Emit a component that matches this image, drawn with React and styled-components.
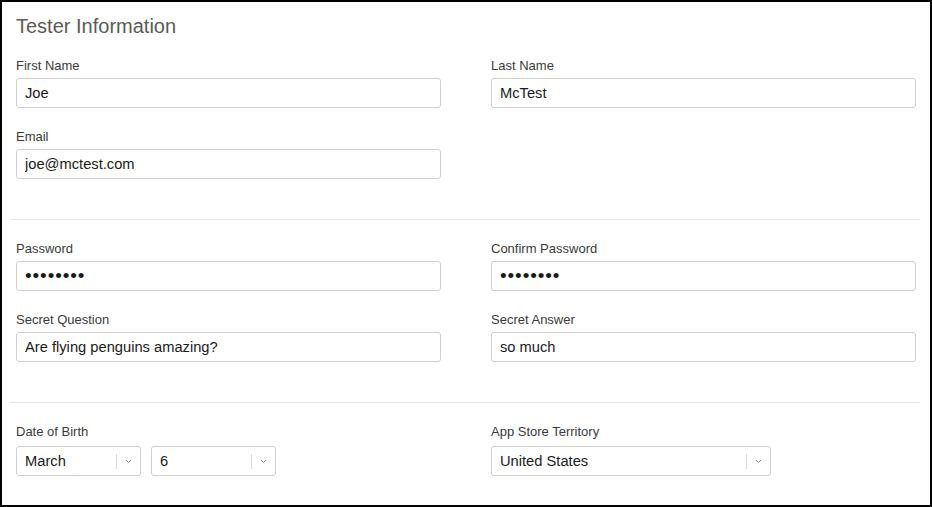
import React from "react";
import styled, { createGlobalStyle } from "styled-components";

const Global = createGlobalStyle`
  html, body { margin: 0; padding: 0; background: #fff; }
  body { font-family: "Liberation Sans", Arial, sans-serif; }
  * { box-sizing: border-box; }
`;

const Frame = styled.div`
  width: 932px;
  height: 507px;
  border: 2px solid #000;
  background: #fff;
  padding: 0 14px;
  overflow: hidden;
`;

const Title = styled.h1`
  margin: 13px 0 0 0;
  font-size: 20px;
  line-height: 23px;
  font-weight: 400;
  color: #5a5a5a;
`;

const Section = styled.section`
  display: flex;
  flex-direction: column;
  gap: 21px;
  padding-top: ${(p) => p.$top}px;
`;

const Row = styled.div`
  display: grid;
  grid-template-columns: 425px 425px;
  column-gap: 50px;
`;

const Field = styled.div`
  display: flex;
  flex-direction: column;
  gap: ${(p) => p.$gap || 5}px;
`;

const Label = styled.label`
  font-size: 13px;
  line-height: 15px;
  color: #3a3a3a;
  height: 15px;
`;

const Input = styled.input`
  width: 100%;
  height: 30px;
  border: 1px solid #cfcfcf;
  border-radius: 3px;
  padding: 0 8px;
  margin: 0;
  font-family: "Liberation Sans", Arial, sans-serif;
  font-size: ${(p) => (p.$mask ? "19px" : "14.7px")};
  letter-spacing: ${(p) => (p.$mask ? "0.9px" : "0")};
  color: #1a1a1a;
  background: #fff;
  outline: none;
`;

const Divider = styled.hr`
  border: 0;
  height: 1px;
  background: #e6e6e6;
  margin: 40px -4px 0 -6px;
`;

const SelectRow = styled.div`
  display: flex;
  gap: 10px;
`;

const Select = styled.div`
  width: ${(p) => p.$w}px;
  height: 30px;
  border: 1px solid #cfcfcf;
  border-radius: 3px;
  display: flex;
  align-items: center;
  background: #fff;
`;

const SelectValue = styled.span`
  flex: 1;
  padding-left: 8px;
  font-size: 14.7px;
  color: #1a1a1a;
`;

const SelectSep = styled.span`
  width: 1px;
  height: 15px;
  background: #dcdcdc;
`;

const Arrow = styled.span`
  width: 23px;
  display: flex;
  align-items: center;
  justify-content: center;
`;

function Chevron() {
  return (
    <svg width="7" height="5" viewBox="0 0 7 5">
      <path d="M1 1 L3.5 3.5 L6 1" fill="none" stroke="#8a8a8a" strokeWidth="1" />
    </svg>
  );
}

function DropDown({ value, w }) {
  return (
    <Select $w={w}>
      <SelectValue>{value}</SelectValue>
      <SelectSep />
      <Arrow>
        <Chevron />
      </Arrow>
    </Select>
  );
}

function TextField({ label, value, mask }) {
  return (
    <Field>
      <Label>{label}</Label>
      <Input readOnly value={value} $mask={mask} />
    </Field>
  );
}

export default function App() {
  const dots = "\u2022\u2022\u2022\u2022\u2022\u2022\u2022\u2022";
  return (
    <>
      <Global />
      <Frame>
        <Title>Tester Information</Title>
        <Section $top={20}>
          <Row>
            <TextField label="First Name" value="Joe" />
            <TextField label="Last Name" value="McTest" />
          </Row>
          <Row>
            <TextField label="Email" value="joe@mctest.com" />
          </Row>
        </Section>
        <Divider />
        <Section $top={21}>
          <Row>
            <TextField label="Password" value={dots} mask />
            <TextField label="Confirm Password" value={dots} mask />
          </Row>
          <Row>
            <TextField label="Secret Question" value="Are flying penguins amazing?" />
            <TextField label="Secret Answer" value="so much" />
          </Row>
        </Section>
        <Divider />
        <Section $top={21}>
          <Row>
            <Field $gap={7}>
              <Label>Date of Birth</Label>
              <SelectRow>
                <DropDown value="March" w={125} />
                <DropDown value="6" w={125} />
              </SelectRow>
            </Field>
            <Field $gap={7}>
              <Label>App Store Territory</Label>
              <DropDown value="United States" w={280} />
            </Field>
          </Row>
        </Section>
      </Frame>
    </>
  );
}
